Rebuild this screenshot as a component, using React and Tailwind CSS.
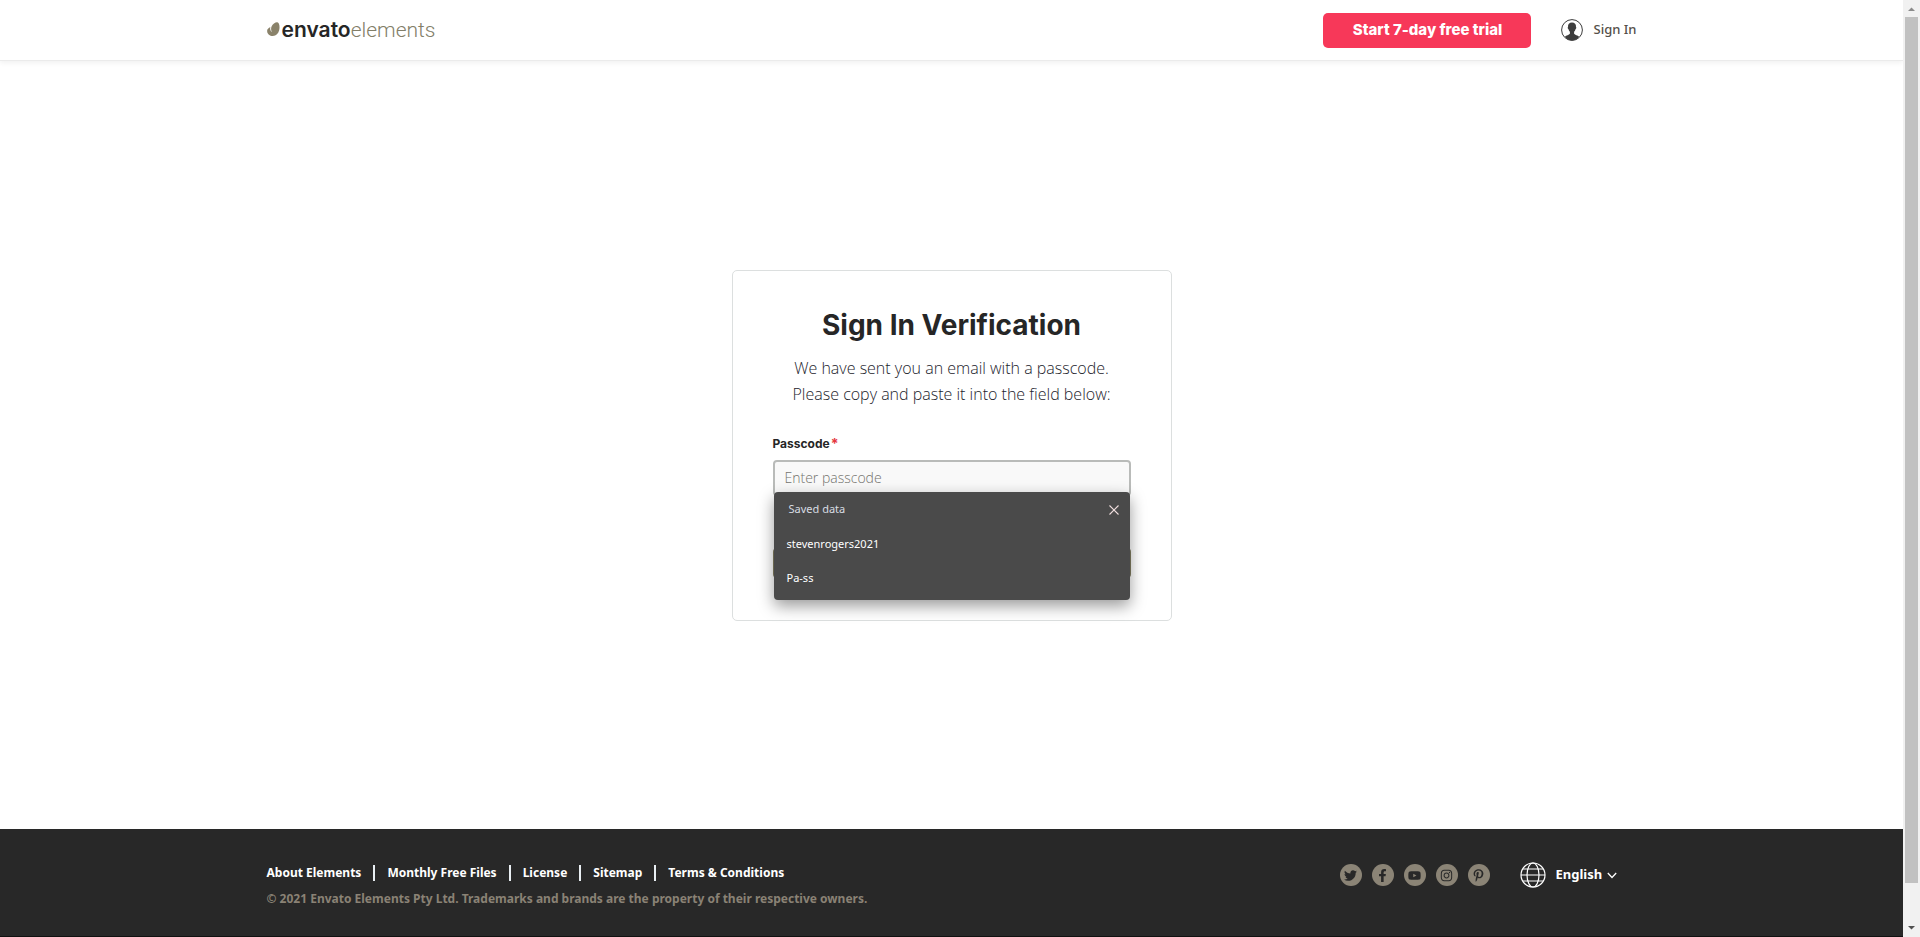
import React from "react";
import { FaTwitter, FaFacebookF, FaYoutube, FaInstagram, FaPinterestP } from "react-icons/fa";

const footerLinks = ["About Elements", "Monthly Free Files", "License", "Sitemap", "Terms & Conditions"];

const socials = [
  { name: "Twitter", Icon: FaTwitter },
  { name: "Facebook", Icon: FaFacebookF },
  { name: "YouTube", Icon: FaYoutube },
  { name: "Instagram", Icon: FaInstagram },
  { name: "Pinterest", Icon: FaPinterestP },
];

function Logo() {
  return (
    <a href="#" className="flex items-baseline gap-[2px]">
      <svg width="13" height="15" viewBox="0 0 14 16" aria-hidden="true">
        <path
          d="M11.600.4C9.800-.3 6.200 1.600 4.900 4.900c-.8 2.100-.5 4 0 5.100.2.4-.2.6-.4.3C3.300 8.700 3.200 7 3.600 5.400L1.900 6.300C.6 7.300 0 8.500.2 10.100c.2 2.900 3 5 6.100 4.900 3.600-.2 6-2.600 6.800-6.200C14 5 13.300 1.100 11.600.4Z"
          fill="#8a826a"
        />
      </svg>
      <span>
        <span className="font-['Inter',sans-serif] text-[21px] leading-7 font-semibold text-[#262626]">envato</span>
        <span className="font-['Roboto',sans-serif] text-[21px] leading-7 font-light text-[#827e68]">elements</span>
      </span>
    </a>
  );
}

function UserIcon() {
  return (
    <svg width="22" height="22" viewBox="0 0 22 22" aria-hidden="true">
      <circle cx="11" cy="11" r="10.400" fill="#fff" stroke="#3d3d3d" strokeWidth="1" />
      <path
        d="M11 3.600c-2.600 0-4.200 1.700-4 4.300-.5.2-.3 1.800.4 2.100.3 1.300.9 2.200 1.500 2.800v1.900c-.8 1.200-3.600 1.500-5 3C5.600 20 8.200 21.400 11 21.400s5.400-1.400 7.100-3.700c-1.400-1.500-4.200-1.800-5-3v-1.900c.6-.6 1.200-1.500 1.500-2.800.7-.3.9-1.900.4-2.100.3-2.700-1.400-4.300-4-4.300Z"
        fill="#3d3d3d"
      />
    </svg>
  );
}

function Header() {
  return (
    <header className="h-[61px] shrink-0 border-b border-[#ebebeb] bg-white shadow-[0_2px_5px_rgba(0,0,0,0.06)]">
      <div className="mx-auto flex h-full max-w-[1370px] items-center justify-between">
        <Logo />
        <div className="flex items-center gap-[30px]">
          <button
            type="button"
            className="h-[35px] w-[208px] rounded-[5px] bg-[#f73859] font-['Inter',sans-serif] text-[15px] font-extrabold text-white"
          >
            Start 7-day free trial
          </button>
          <a href="#" className="flex items-center gap-[10px] text-[13px] font-medium text-[#55504a]">
            <UserIcon />
            Sign In
          </a>
        </div>
      </div>
    </header>
  );
}

function SavedData() {
  return (
    <div className="absolute inset-x-px top-8 rounded-[4px] bg-[#4a4a4a] pb-1 shadow-[0_6px_16px_rgba(0,0,0,0.4)]">
      <div className="flex h-9 items-center justify-between pr-[11px] pl-[15px]">
        <span className="text-[11px] text-[#d8dde2]">Saved data</span>
        <button type="button" aria-label="Close">
          <svg width="10" height="10" viewBox="0 0 10 10" stroke="#f0dede" strokeWidth="1.100" aria-hidden="true">
            <path d="M.5.5l9 9M9.500.5l-9 9" />
          </svg>
        </button>
      </div>
      <ul className="text-[11px] text-white">
        <li className="flex h-[34px] items-center px-[13px]">stevenrogers2021</li>
        <li className="flex h-[34px] items-center px-[13px]">Pa-ss</li>
      </ul>
    </div>
  );
}

function VerificationCard() {
  return (
    <form className="w-[440px] rounded-[5px] border border-[#dcdfdf] bg-white px-10 pt-[34px] pb-[42px]">
      <h1 className="text-center font-['Inter',sans-serif] text-[28px] leading-10 font-bold text-[#262626]">
        Sign In Verification
      </h1>
      <p className="mt-[10px] text-center font-['Open_Sans',sans-serif] text-base leading-[26px] font-light text-[#1c232c]">
        We have sent you an email with a passcode.
        <br />
        Please copy and paste it into the field below:
      </p>
      <label
        htmlFor="passcode"
        className="mt-[27px] flex font-['Inter',sans-serif] text-xs leading-5 font-bold text-[#262626]"
      >
        Passcode<span className="pl-px text-sm leading-5 text-[#e5383f]">*</span>
      </label>
      <div className="relative mt-[6px]">
        <input
          id="passcode"
          type="text"
          placeholder="Enter passcode"
          className="block h-9 w-full rounded-[4px] border-2 border-[#b9bbb9] bg-[#f9f9f9] px-[10px] font-['Open_Sans',sans-serif] text-sm font-light text-[#262626] outline-none placeholder:text-[#73736d]"
        />
        <SavedData />
      </div>
      <button
        type="submit"
        aria-label="Submit passcode"
        className="mt-[52px] block h-[30px] w-full rounded-[4px] bg-[#827e62]"
      />
    </form>
  );
}

function Footer() {
  return (
    <footer className="shrink-0 border-b border-[#111] bg-[#282828]">
      <div className="mx-auto flex h-[107px] max-w-[1370px] justify-between pt-8 pr-5">
        <div className="text-xs leading-6 font-bold">
          <nav className="flex items-center text-white">
            {footerLinks.map((label, i) => (
              <React.Fragment key={label}>
                {i > 0 && <span className="mx-3 h-4 w-[2px] bg-[#e8eef2]" />}
                <a href="#">{label}</a>
              </React.Fragment>
            ))}
          </nav>
          <p className="mt-[2px] text-[#8a8275]">
            © 2021 Envato Elements Pty Ltd. Trademarks and brands are the property of their respective owners.
          </p>
        </div>
        <div className="flex h-7 items-center">
          <div className="flex gap-[10px]">
            {socials.map(({ name, Icon }) => (
              <a
                key={name}
                href="#"
                aria-label={name}
                className="flex size-[22px] items-center justify-center rounded-full bg-[#8b8476] text-[#282828]"
              >
                <Icon size={13} />
              </a>
            ))}
          </div>
          <svg
            width="26"
            height="26"
            viewBox="0 0 26 26"
            fill="none"
            stroke="#fff"
            strokeWidth="1.200"
            className="ml-[30px]"
            aria-hidden="true"
          >
            <circle cx="13" cy="13" r="12" />
            <ellipse cx="13" cy="13" rx="6" ry="12" />
            <path d="M1 13h24M3 7h20M3 19h20" />
          </svg>
          <label className="relative ml-[10px] flex items-center">
            <select
              aria-label="Language"
              className="w-[61px] appearance-none bg-transparent text-[13px] font-bold text-white outline-none"
            >
              <option>English</option>
            </select>
            <svg
              width="10"
              height="7"
              viewBox="0 0 10 7"
              fill="none"
              stroke="#fff"
              strokeWidth="1.300"
              className="pointer-events-none absolute right-0"
              aria-hidden="true"
            >
              <path d="M.8 1 5 5.500 9.200 1" />
            </svg>
          </label>
        </div>
      </div>
    </footer>
  );
}

function ScrollTrack() {
  return (
    <div className="flex w-[17px] shrink-0 flex-col items-center bg-[#f1f1f1]" aria-hidden="true">
      <svg width="17" height="17" viewBox="0 0 17 17">
        <path d="M5 11h7L8.500 7.500Z" fill="#8a8a8a" />
      </svg>
      <div className="w-[13px] grow bg-[#c1c1c1]" />
      <div className="flex h-[54px] items-end">
        <svg width="17" height="17" viewBox="0 0 17 17">
          <path d="M5 6h7L8.500 9.500Z" fill="#505050" />
        </svg>
      </div>
    </div>
  );
}

export default function App() {
  return (
    <div className="flex min-h-screen bg-white font-['Noto_Sans',sans-serif]">
      <div className="flex min-w-0 flex-1 flex-col">
        <Header />
        <main className="flex flex-1 items-center justify-center">
          <VerificationCard />
        </main>
        <Footer />
      </div>
      <ScrollTrack />
    </div>
  );
}
